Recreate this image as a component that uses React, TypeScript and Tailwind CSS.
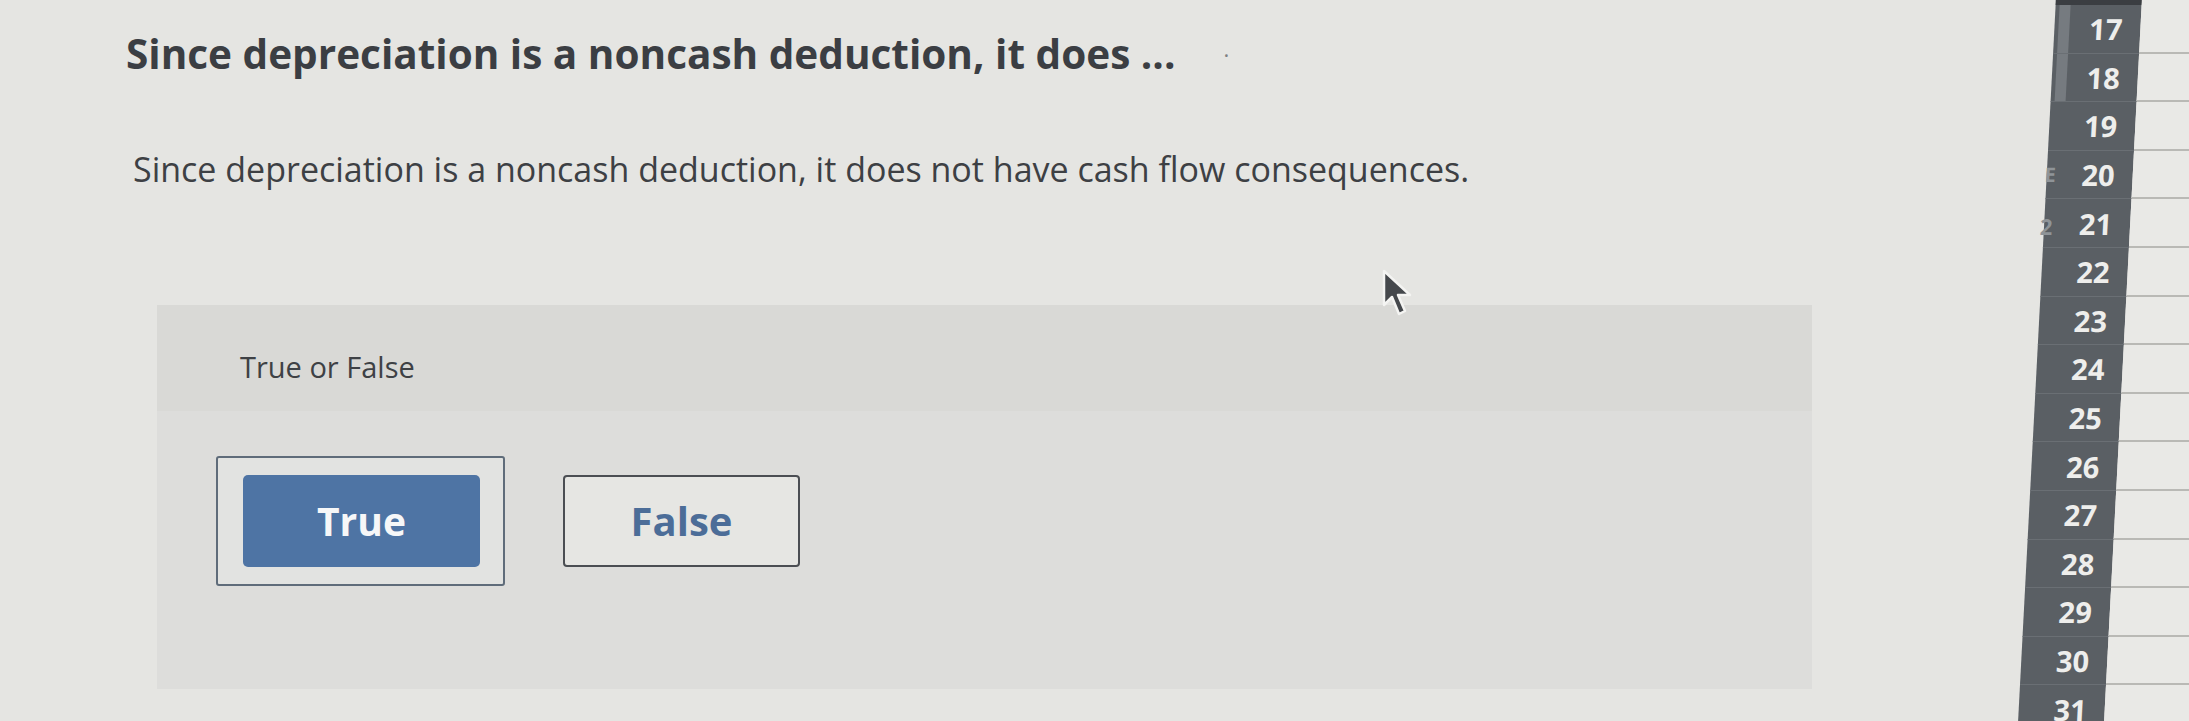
const ROWS = [17, 18, 19, 20, 21, 22, 23, 24, 25, 26, 27, 28, 29, 30, 31];

function Cursor() {
  return (
    <svg
      className="absolute left-[1381px] top-[268px]"
      width={34}
      height={50}
      viewBox="0 0 34 50"
    >
      <path
        d="M3 3 L3 37 L11 29 L18 46 L24 43 L17 27 L29 27 Z"
        fill="#45484c"
        stroke="#f4f4f2"
        strokeWidth={2.5}
        strokeLinejoin="round"
      />
    </svg>
  );
}

function DayStrip() {
  return (
    <div className="flex h-full w-[152px] shrink-0 -skew-x-3">
      {/* dark number column */}
      <div className="flex w-[86px] shrink-0 flex-col bg-[#5a5f64]">
        <div className="h-[5px] shrink-0 bg-[#3b3e42]" />
        {ROWS.map((n, i) => (
          <div
            key={n}
            className="relative flex h-[48.6px] shrink-0 items-center justify-end border-b border-[#6a6f74] pr-[18px]"
          >
            {i < 2 && (
              <span className="absolute left-[4px] top-0 h-full w-[11px] bg-[#767b80]" />
            )}
            {n === 20 && (
              <span className="absolute left-[-2px] top-[14px] text-[20px] font-bold leading-none text-[#8f9498]">
                E
              </span>
            )}
            {n === 21 && (
              <span className="absolute left-[-4px] top-[16px] text-[22px] font-bold leading-none text-[#8f9498]">
                2
              </span>
            )}
            <span className="text-[29px] font-bold leading-none text-[#eeeeec]">{n}</span>
          </div>
        ))}
      </div>
      {/* ruled paper column */}
      <div className="flex min-w-[120px] flex-1 flex-col bg-[#e9e9e6]">
        <div className="h-[5px] shrink-0" />
        {ROWS.map((n) => (
          <div key={n} className="h-[48.6px] shrink-0 border-b-2 border-[#b9b9b5]" />
        ))}
      </div>
    </div>
  );
}

export default function App() {
  return (
    <div className="relative flex h-[721px] w-[2189px] overflow-hidden bg-[#e5e5e2] font-['Open_Sans','Lato',sans-serif]">
      <div className="flex-1 pl-[126px] pt-[30px]">
        <h1 className="flex items-center text-[40.5px] font-bold leading-[48px] text-[#3b3e43]">
          Since depreciation is a noncash deduction, it does ...
          <span className="ml-[48px] text-[22px] font-normal text-[#7e8082]">·</span>
        </h1>

        <p className="mt-[71px] pl-[7px] text-[34px] leading-[40px] text-[#3d4044]">
          Since depreciation is a noncash deduction, it does not have cash flow consequences.
        </p>

        <div className="ml-[31px] mt-[116px] flex h-[384px] w-[1655px] flex-col bg-[#dddddb]">
          <div className="h-[106px] shrink-0 bg-[#d9d9d6] pl-[83px] pt-[44px]">
            <span className="text-[29px] leading-[36px] text-[#3e4145]">True or False</span>
          </div>

          <div className="flex items-center pl-[59px] pt-[45px]">
            <div className="flex h-[130px] w-[289px] items-center justify-center rounded-[3px] border-2 border-[#5f6c7a] bg-[#e2e3e1] pl-[2px]">
              <button className="flex h-[92px] w-[237px] items-center justify-center rounded-[5px] bg-[#4e74a4] text-[39px] font-bold text-[#f6f7f8]">
                True
              </button>
            </div>
            <button className="ml-[58px] flex h-[92px] w-[237px] items-center justify-center rounded-[4px] border-2 border-[#4b4e53] bg-[#e6e6e3] text-[40px] font-bold text-[#4c6d98]">
              False
            </button>
          </div>
        </div>
      </div>

      <DayStrip />
      <Cursor />
    </div>
  );
}
